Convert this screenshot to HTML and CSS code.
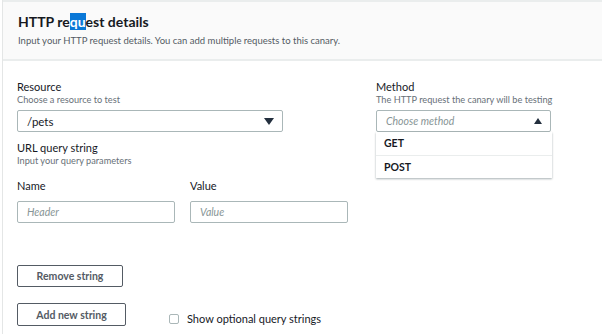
FILE: index.html
```html
<!DOCTYPE html>
<html lang="en">
<head>
  <meta charset="UTF-8" />
  <meta name="viewport" content="width=device-width, initial-scale=1.0"/>
  <title>HTTP request details</title>
  <link rel="stylesheet" href="styles.css">
</head>
<body>
  <div class="panel">
    <div class="panel-header">
      <h2 class="title">HTTP re<span class="selected">qu</span>est details</h2>
      <p class="subtitle">Input your HTTP request details. You can add multiple requests to this canary.</p>
    </div>

    <div class="panel-body">
      <div class="left-col">
        <div class="field">
          <label class="label">Resource</label>
          <span class="desc">Choose a resource to test</span>
          <div class="select wide">
            <span class="value">/pets</span>
            <span class="caret down"></span>
          </div>
        </div>

        <div class="field query">
          <label class="label">URL query string</label>
          <span class="desc">Input your query parameters</span>
        </div>

        <div class="pair">
          <div class="pair-item">
            <label class="label">Name</label>
            <div class="input"><span class="placeholder">Header</span></div>
          </div>
          <div class="pair-item">
            <label class="label">Value</label>
            <div class="input"><span class="placeholder">Value</span></div>
          </div>
        </div>

        <button class="btn remove">Remove string</button>

        <div class="actions">
          <button class="btn add">Add new string</button>
          <label class="check">
            <span class="box"></span>
            Show optional query strings
          </label>
        </div>
      </div>

      <div class="right-col">
        <div class="field">
          <label class="label">Method</label>
          <span class="desc">The HTTP request the canary will be testing</span>
          <div class="dropdown">
            <div class="select open">
              <span class="placeholder">Choose method</span>
              <span class="caret up"></span>
            </div>
            <ul class="options">
              <li>GET</li>
              <li>POST</li>
            </ul>
          </div>
        </div>
      </div>
    </div>
  </div>
</body>
</html>
```

FILE: styles.css
```css
* {
  box-sizing: border-box;
}

body {
  margin: 0;
  background: #ffffff;
  font-family: Lato, "Open Sans", sans-serif;
  color: #16191f;
}

.panel {
  margin-left: 2px;
  border-left: 1px solid #e4e6e6;
  min-height: 334px;
}

.panel-header {
  background: #fafafa;
  border-top: 2px solid #eaeded;
  border-bottom: 2px solid #eaeded;
  padding: 10px 15px 12px;
}

.title {
  margin: 0;
  font-size: 14px;
  font-weight: 700;
  line-height: 20px;
}

.selected {
  background: #0a78d7;
  color: #ffffff;
}

.subtitle {
  margin: 2px 0 0;
  font-size: 9.5px;
  line-height: 13px;
  color: #545b64;
}

.panel-body {
  display: flex;
  padding: 19px 14px 0;
}

.left-col {
  width: 359px;
  display: flex;
  flex-direction: column;
}

.field {
  display: flex;
  flex-direction: column;
}

.query {
  margin-top: 9px;
}

.label {
  font-size: 11px;
  line-height: 14px;
  color: #16191f;
}

.desc {
  font-size: 9.2px;
  line-height: 12px;
  color: #687078;
  margin-bottom: 4px;
}

.select {
  height: 22px;
  border: 1px solid #aab7b8;
  border-radius: 2px;
  display: flex;
  align-items: center;
  justify-content: space-between;
  padding: 0 8px 0 9px;
  font-size: 11.5px;
}

.select.wide {
  width: 266px;
}

.dropdown {
  position: relative;
  width: 175px;
}

.value {
  color: #16191f;
}

.placeholder {
  font-style: italic;
  color: #879596;
  font-size: 10.5px;
}

.caret {
  width: 0;
  height: 0;
  border-left: 5px solid transparent;
  border-right: 5px solid transparent;
}

.caret.down {
  border-top: 7px solid #232f3e;
}

.caret.up {
  border-left-width: 4px;
  border-right-width: 4px;
  border-bottom: 6px solid #232f3e;
}

.options {
  position: absolute;
  top: 22px;
  left: 0;
  width: 176px;
  margin: 0;
  padding: 0;
  list-style: none;
  background: #ffffff;
  box-shadow: 0 1px 2px rgba(0, 28, 36, 0.35);
}

.options li {
  height: 23px;
  line-height: 23px;
  padding-left: 8px;
  font-size: 10.5px;
  font-weight: 700;
  color: #16191f;
}

.options li + li {
  border-top: 1px solid #eaeded;
}

.pair {
  display: flex;
  gap: 15px;
  margin-top: 8px;
}

.pair-item {
  display: flex;
  flex-direction: column;
  gap: 8px;
}

.input {
  width: 158px;
  height: 22px;
  border: 1px solid #aab7b8;
  border-radius: 2px;
  display: flex;
  align-items: center;
  padding-left: 9px;
}

.btn {
  font-family: inherit;
  font-size: 10.5px;
  font-weight: 700;
  color: #545b64;
  background: #ffffff;
  border: 1px solid #545b64;
  border-radius: 2px;
  height: 22px;
  padding: 0;
  white-space: nowrap;
}

.remove {
  align-self: flex-start;
  margin-top: 42px;
  width: 106px;
}

.actions {
  display: flex;
  align-items: center;
  margin-top: 16px;
}

.add {
  width: 109px;
  height: 23px;
}

.check {
  display: flex;
  align-items: center;
  gap: 8px;
  margin: 8px 0 0 43px;
  font-size: 11px;
  color: #16191f;
}

.box {
  width: 10px;
  height: 10px;
  border: 1px solid #aab7b8;
  border-radius: 2px;
}
```
